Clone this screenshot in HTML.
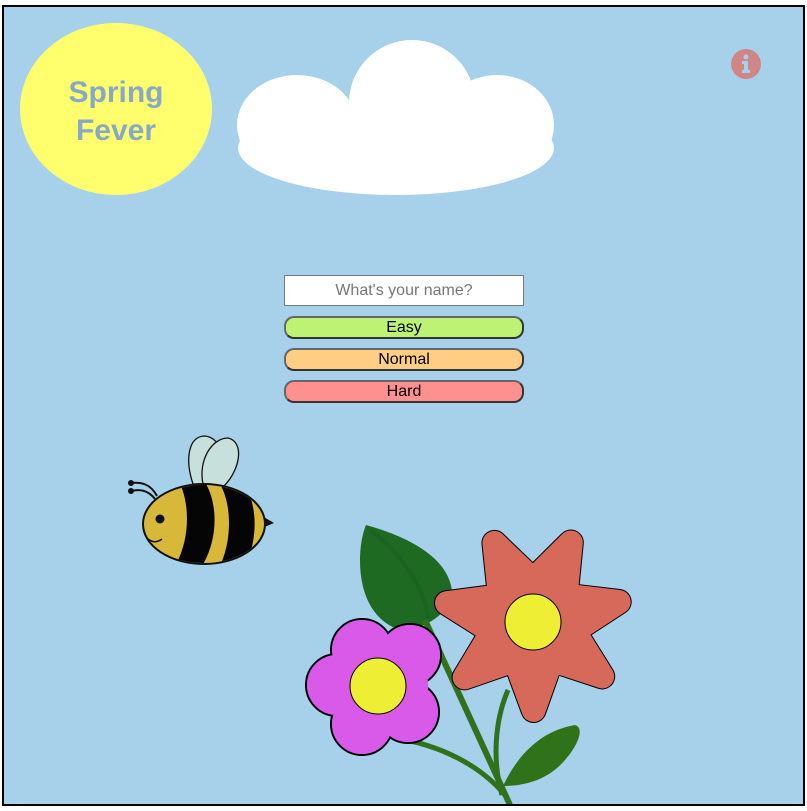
<!DOCTYPE html>
<html><head><style>
html,body{margin:0;padding:0;background:#fff;width:807px;height:811px;overflow:hidden;font-family:"Liberation Sans",sans-serif}
#f{position:absolute;left:2px;top:5px;width:799px;height:797px;border:2px solid #000;background:#a7d1eb;overflow:hidden}
.in{position:absolute;width:240px;height:31px;background:#fff;border:1px solid #777;box-sizing:border-box;text-align:center;line-height:29px;font-size:16px;color:#777}
.b{position:absolute;width:240px;height:23px;box-sizing:border-box;border:2px solid #333;border-top-color:#666;border-left-color:#666;border-radius:10px;text-align:center;font-size:16px;line-height:19px;color:#000}
</style></head><body>
<div id="f">
<svg width="799" height="797" style="position:absolute;left:0;top:0" viewBox="4 7 799 797">
<ellipse cx="116" cy="109" rx="96" ry="86" fill="#ffff6e"/>
<text x="116" y="102" font-size="30" fill="#87a8c6" text-anchor="middle" font-family="Liberation Sans" font-weight="bold">Spring</text>
<text x="116" y="140" font-size="30" fill="#87a8c6" text-anchor="middle" font-family="Liberation Sans" font-weight="bold">Fever</text>
<g fill="#fff">
<ellipse cx="396" cy="148" rx="158" ry="47"/>
<circle cx="412" cy="103" r="63"/>
<ellipse cx="297" cy="125" rx="60" ry="50"/>
<ellipse cx="497" cy="125" rx="57" ry="50"/>
</g>
<circle cx="746" cy="64" r="15" fill="#d08686"/>
<circle cx="746" cy="57" r="2.5" fill="#a7d1eb"/>
<path d="M742 61h6v9h2v3h-8v-3h2v-6h-2z" fill="#a7d1eb"/>
<!-- bee -->
<path d="M193 484 C185 460 188 436 205 436 C222 438 225 460 222 484Z" fill="#c8e0dc" stroke="#111" stroke-width="1.3"/>
<path d="M203 484 C198 460 212 438 228 438 C245 442 240 470 224 486Z" fill="#c8e0dc" stroke="#111" stroke-width="1.3"/>
<path d="M157 496 C150 483 140 482 131 483 M155 499 C148 490 140 489 131 491" fill="none" stroke="#111" stroke-width="2"/>
<circle cx="131" cy="483" r="3" fill="#111"/><circle cx="131" cy="491" r="3" fill="#111"/>
<path d="M262 516 L274 523 L262 528Z" fill="#111"/>
<ellipse cx="204" cy="524" rx="61" ry="40" fill="#d8b838" stroke="#111" stroke-width="2"/>
<clipPath id="bc"><ellipse cx="204" cy="524" rx="60" ry="39"/></clipPath>
<g clip-path="url(#bc)" fill="#050505">
<path d="M180 484 C190 505 190 540 175 566 L202 566 C218 540 218 505 206 484Z"/>
<path d="M220 484 C232 505 232 540 220 566 L245 566 C258 540 258 505 244 484Z"/>
</g>
<circle cx="160" cy="519" r="4.5" fill="#111"/>
<path d="M148 539 C153 543 158 542 162 539" fill="none" stroke="#111" stroke-width="1.5"/>
<!-- leaves & stems -->
<path d="M366 525 C420 540 455 565 452 600 C440 620 420 630 400 630 C370 620 360 590 360 560 C360 545 363 532 366 525Z" fill="#1e6a22"/>
<path d="M370 530 C410 560 428 600 428 620" fill="none" stroke="#1b6420" stroke-width="4"/>
<path d="M425 620 L510 805" stroke="#2f721b" stroke-width="6" fill="none"/>
<path d="M508 690 C495 720 492 760 502 795" stroke="#2f721b" stroke-width="5" fill="none"/>
<path d="M395 738 C440 745 480 765 505 795" stroke="#2f721b" stroke-width="5" fill="none"/>
<path d="M503 786 C520 750 545 730 575 725 C585 728 578 745 565 760 C548 780 525 786 503 786Z" fill="#30721a"/>
<!-- red flower -->
<g stroke-linejoin="round">
<polygon points="494.4,542.9 533,580 570.8,542.5 565.6,595.6 618.7,601.9 574,631.1 602.2,676.4 551.5,659.7 533.6,710 515.1,659.9 464.6,677.4 492.1,631.7 447,603.1 500,596.1" fill="#000" stroke="#000" stroke-width="26"/>
<polygon points="494.4,542.9 533,580 570.8,542.5 565.6,595.6 618.7,601.9 574,631.1 602.2,676.4 551.5,659.7 533.6,710 515.1,659.9 464.6,677.4 492.1,631.7 447,603.1 500,596.1" fill="#d6695a" stroke="#d6695a" stroke-width="24"/>
</g>
<circle cx="533" cy="622" r="28" fill="#eeef34" stroke="#000" stroke-width="1"/>
<!-- pink flower -->
<g stroke="#000" stroke-width="2" fill="#d95ae8">
<circle cx="362" cy="650" r="31"/><circle cx="410" cy="655" r="31"/><circle cx="408" cy="712" r="31"/><circle cx="362" cy="724" r="31"/><circle cx="337" cy="685" r="31"/>
</g>
<g fill="#d95ae8">
<circle cx="362" cy="650" r="30"/><circle cx="410" cy="655" r="30"/><circle cx="408" cy="712" r="30"/><circle cx="362" cy="724" r="30"/><circle cx="337" cy="685" r="30"/>
<circle cx="378" cy="686" r="50"/>
</g>
<circle cx="378" cy="686" r="28" fill="#eeef34" stroke="#000" stroke-width="1"/>
</svg>
<div class="in" style="left:280px;top:268px">What's your name?</div>
<div class="b" style="left:280px;top:309px;background:#bdf272">Easy</div>
<div class="b" style="left:280px;top:341px;background:#ffcd84">Normal</div>
<div class="b" style="left:280px;top:373px;background:#ff9090">Hard</div>
</div>
</body></html>
